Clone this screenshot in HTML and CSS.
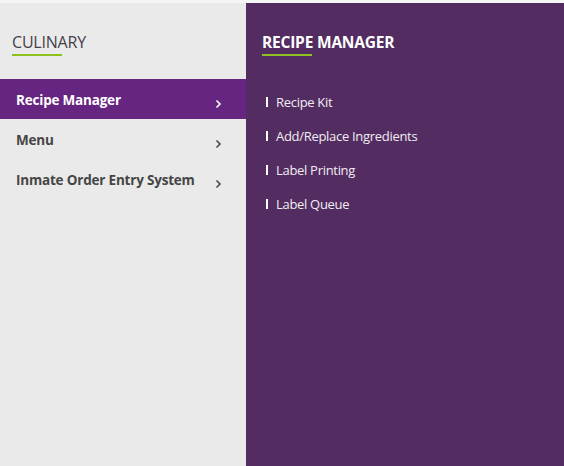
FILE: index.html
```html
<!DOCTYPE html>
<html lang="en">
<head>
    <meta charset="UTF-8">
    <meta name="viewport" content="width=device-width, initial-scale=1.0">
    <title>Culinary</title>
    <link rel="stylesheet" href="styles.css">
</head>
<body>

    <div class="topline"></div>

    <div class="menu">
        <!-- Kolom kiri -->
        <div class="side">
            <div class="head">
                <h1 class="title">CULINARY</h1>
            </div>
            <ul class="side-list">
                <li class="side-item active">
                    <span>Recipe Manager</span>
                    <svg class="chev" width="7" height="10" viewBox="0 0 7 10"><path d="M1.5 1.5 L5 5 L1.5 8.5" fill="none" stroke="currentColor" stroke-width="1.6"/></svg>
                </li>
                <li class="side-item">
                    <span>Menu</span>
                    <svg class="chev" width="7" height="10" viewBox="0 0 7 10"><path d="M1.5 1.5 L5 5 L1.5 8.5" fill="none" stroke="currentColor" stroke-width="1.6"/></svg>
                </li>
                <li class="side-item">
                    <span>Inmate Order Entry System</span>
                    <svg class="chev" width="7" height="10" viewBox="0 0 7 10"><path d="M1.5 1.5 L5 5 L1.5 8.5" fill="none" stroke="currentColor" stroke-width="1.6"/></svg>
                </li>
            </ul>
        </div>

        <!-- Panel kanan -->
        <div class="panel">
            <div class="head">
                <h2 class="title">RECIPE MANAGER</h2>
            </div>
            <ul class="panel-list">
                <li class="panel-item">Recipe Kit</li>
                <li class="panel-item">Add/Replace Ingredients</li>
                <li class="panel-item">Label Printing</li>
                <li class="panel-item">Label Queue</li>
            </ul>
        </div>
    </div>

</body>
</html>
```

FILE: styles.css
```css
* {
    margin: 0;
    padding: 0;
    box-sizing: border-box;
    font-family: 'Open Sans', sans-serif;
}
body {
    background: #eaeaea;
    height: 466px;
    overflow: hidden;
}

.topline {
    height: 3px;
    background: #f5f5f5;
}

.menu {
    display: flex;
    height: 463px;
}

/* Judul kolom */
.head {
    height: 76px;
    padding: 28px 0 0 12px;
}
.title {
    display: inline-block;
    font-size: 16px;
    line-height: 20px;
    font-weight: 400;
    padding-bottom: 4px;
    position: relative;
}
.title::after {
    content: "";
    position: absolute;
    left: 0;
    bottom: 0;
    width: 50px;
    height: 2px;
    background: #8cc11f;
}

/* Kolom kiri */
.side {
    width: 246px;
    background: #eaeaea;
}
.side .title {
    color: #46404b;
    letter-spacing: -0.2px;
}

.side-list {
    list-style: none;
}
.side-item {
    height: 40px;
    display: flex;
    align-items: center;
    justify-content: space-between;
    padding: 2px 24px 0 16px;
    font-size: 13.5px;
    font-weight: 700;
    color: #454545;
    letter-spacing: -0.2px;
}
.side-item .chev {
    margin-top: 8px;
    color: #4a4a4a;
}
.side-item.active {
    background: #662580;
    color: #fff;
}
.side-item.active .chev {
    color: #fff;
}

/* Panel kanan */
.panel {
    flex: 1;
    background: #532c61;
}
.panel .head {
    padding-left: 16px;
}
.panel .title {
    color: #fff;
    font-weight: 700;
    font-size: 15.5px;
    letter-spacing: -0.2px;
}
.panel-list {
    list-style: none;
    padding-top: 6px;
}
.panel-item {
    height: 34px;
    display: flex;
    align-items: center;
    padding-left: 30px;
    font-size: 13px;
    color: #f1edf3;
    letter-spacing: -0.3px;
    position: relative;
}
.panel-item::before {
    content: "";
    position: absolute;
    left: 20px;
    top: 12px;
    width: 2px;
    height: 10px;
    background: #fff;
}
```
